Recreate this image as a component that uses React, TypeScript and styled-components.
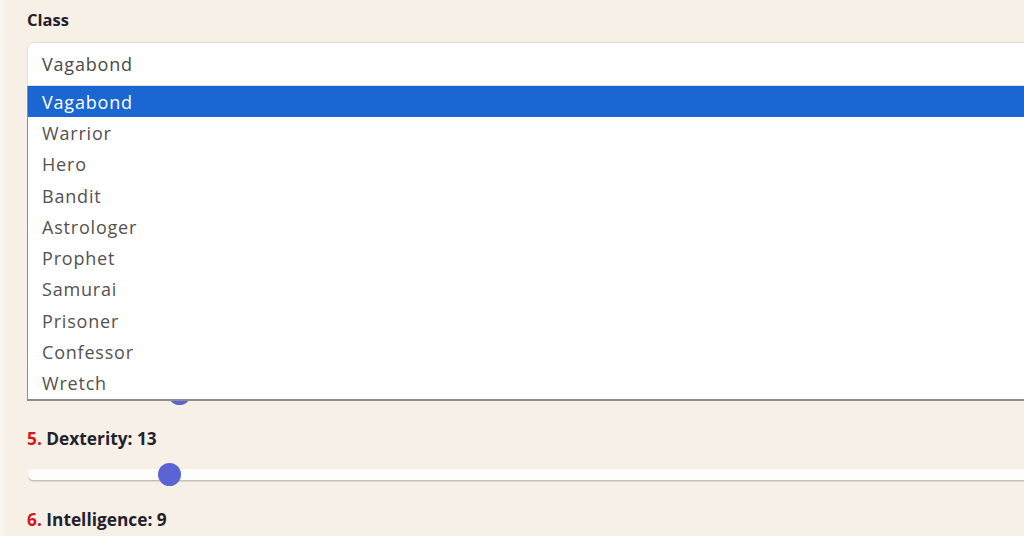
import * as React from 'react'
import { FC } from 'react';
import styled, { createGlobalStyle } from 'styled-components';

const GlobalStyle = createGlobalStyle`
    html, body {
        margin: 0;
        padding: 0;
        background: #f7f0e6;
        overflow: hidden;
    }
`;

const Page = styled.div`
    width: 1100px;
    height: 536px;
    overflow: hidden;
    padding: 10px 0 0 27px;
    box-sizing: border-box;
    background: linear-gradient(90deg, #faf6f0 0px, #f7f0e6 10px);
    font-family: "Open Sans", "Liberation Sans", sans-serif;
`;

const FieldLabel = styled.div`
    font-family: "Open Sans", "Lato", sans-serif;
    font-weight: 700;
    font-size: 16.5px;
    line-height: 20px;
    color: #23212c;
    margin-bottom: 12px;
`;

const SelectWrap = styled.div`
    position: relative;
    width: 1020px;
`;

const SelectBox = styled.div`
    height: 44px;
    box-sizing: border-box;
    display: flex;
    align-items: center;
    padding: 0 14px;
    background: #ffffff;
    border: 1px solid #e4ddd2;
    border-radius: 6px 6px 0 0;
    font-size: 18px;
    letter-spacing: 0.8px;
    color: #4a4a4a;
`;

const OptionList = styled.ul`
    position: absolute;
    top: 44px;
    left: 0;
    right: 0;
    margin: 0;
    padding: 0;
    list-style: none;
    background: #ffffff;
    border-left: 1px solid #8f8f8f;
    border-bottom: 2px solid #8c8c8c;
    z-index: 10;
`;

const OptionItem = styled.li<{ $active?: boolean }>`
    height: 31.3px;
    display: flex;
    align-items: center;
    padding: 0 14px;
    font-size: 18px;
    letter-spacing: 0.8px;
    color: ${p => p.$active ? '#ffffff' : '#555150'};
    background: ${p => p.$active ? '#1a67d3' : 'transparent'};
`;

const StatList = styled.div`
    display: flex;
    flex-direction: column;
    margin-top: 19px;
`;

const StatRow = styled.div`
    height: 81px;
    display: flex;
    flex-direction: column;
    gap: 13px;
`;

const StatLabel = styled.div`
    font-family: "Open Sans", "Lato", sans-serif;
    font-weight: 700;
    font-size: 17.3px;
    line-height: 20px;
    color: #23212c;
`;

const StatIndex = styled.span`
    color: #d7161d;
`;

const SliderTrack = styled.div`
    position: relative;
    width: 1014px;
    height: 24px;
    margin-left: 1px;

    &::before {
        content: "";
        position: absolute;
        left: 0;
        right: 0;
        top: 7px;
        height: 11px;
        border-radius: 6px;
        background: #fdfdfc;
        box-shadow: 0 1.5px 0 #c4c0ba;
    }
`;

const SliderThumb = styled.div`
    position: absolute;
    top: 1px;
    width: 23px;
    height: 23px;
    border-radius: 50%;
    background: #5c63d4;
`;

interface Stat {
    name: string;
    value: number;
}

const classes = ['Vagabond', 'Warrior', 'Hero', 'Bandit', 'Astrologer', 'Prophet', 'Samurai', 'Prisoner', 'Confessor', 'Wretch'];

const stats: Stat[] = [
    { name: 'Vigor', value: 15 },
    { name: 'Mind', value: 10 },
    { name: 'Endurance', value: 11 },
    { name: 'Strength', value: 14 },
    { name: 'Dexterity', value: 13 },
    { name: 'Intelligence', value: 9 },
    { name: 'Faith', value: 9 },
];

const StatSlider: FC<{ value: number }> = ({ value }) => {
    const left = (value / 99) * (1014 - 24);
    return <SliderTrack>
        <SliderThumb style={{ left }} />
    </SliderTrack>
};

export default function App() {
    const selected = 'Vagabond';
    return (<>
        <GlobalStyle />
        <Page>
            <FieldLabel>Class</FieldLabel>
            <SelectWrap>
                <SelectBox>{selected}</SelectBox>
                <OptionList>
                    {classes.map(c => <OptionItem key={c} $active={c === selected}>{c}</OptionItem>)}
                </OptionList>
            </SelectWrap>
            <StatList>
                {stats.map((s, i) => (
                    <StatRow key={s.name}>
                        <StatLabel><StatIndex>{i + 1}.</StatIndex> {s.name}: {s.value}</StatLabel>
                        <StatSlider value={s.value} />
                    </StatRow>
                ))}
            </StatList>
        </Page>
    </>)
}
